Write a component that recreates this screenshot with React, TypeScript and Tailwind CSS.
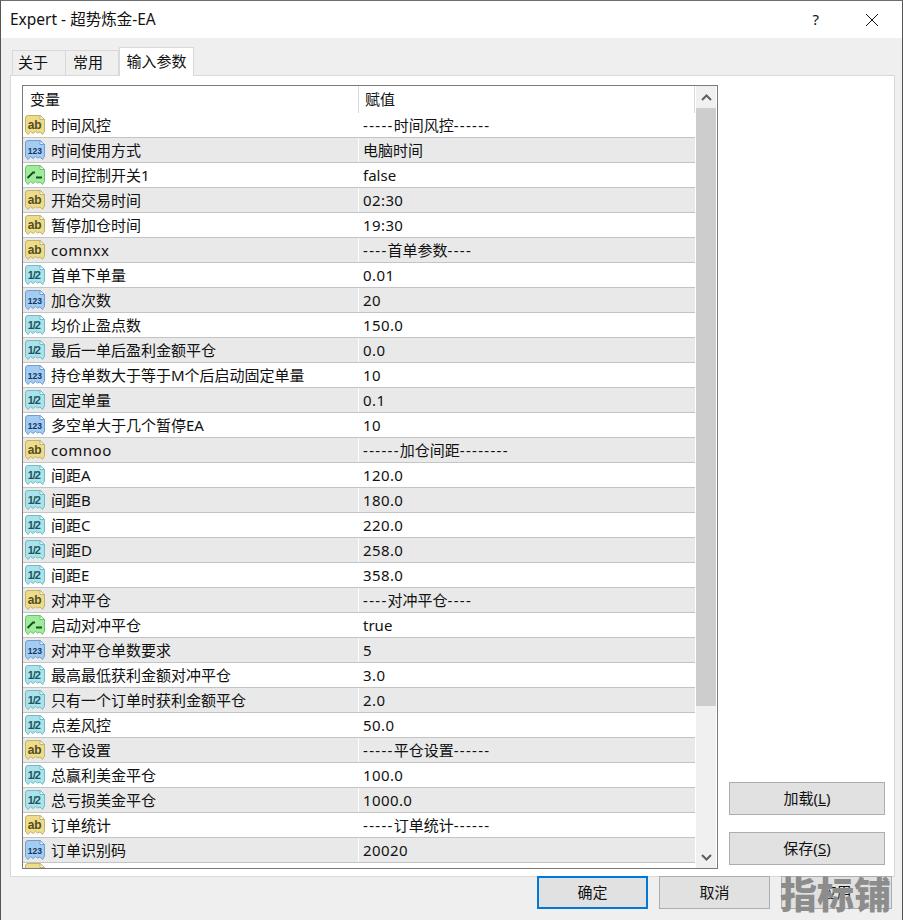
import React from 'react'

type Kind = 'ab' | '123' | 'sw' | 'half'

const rows: [Kind, string, string][] = [
  ['ab', '时间风控', '-----时间风控------'],
  ['123', '时间使用方式', '电脑时间'],
  ['sw', '时间控制开关1', 'false'],
  ['ab', '开始交易时间', '02:30'],
  ['ab', '暂停加仓时间', '19:30'],
  ['ab', 'comnxx', '----首单参数----'],
  ['half', '首单下单量', '0.01'],
  ['123', '加仓次数', '20'],
  ['half', '均价止盈点数', '150.0'],
  ['half', '最后一单后盈利金额平仓', '0.0'],
  ['123', '持仓单数大于等于M个后启动固定单量', '10'],
  ['half', '固定单量', '0.1'],
  ['123', '多空单大于几个暂停EA', '10'],
  ['ab', 'comnoo', '------加仓间距--------'],
  ['half', '间距A', '120.0'],
  ['half', '间距B', '180.0'],
  ['half', '间距C', '220.0'],
  ['half', '间距D', '258.0'],
  ['half', '间距E', '358.0'],
  ['ab', '对冲平仓', '----对冲平仓----'],
  ['sw', '启动对冲平仓', 'true'],
  ['123', '对冲平仓单数要求', '5'],
  ['half', '最高最低获利金额对冲平仓', '3.0'],
  ['half', '只有一个订单时获利金额平仓', '2.0'],
  ['half', '点差风控', '50.0'],
  ['ab', '平仓设置', '-----平仓设置------'],
  ['half', '总赢利美金平仓', '100.0'],
  ['half', '总亏损美金平仓', '1000.0'],
  ['ab', '订单统计', '-----订单统计------'],
  ['123', '订单识别码', '20020'],
]

const palette: Record<Kind, { fill: string; edge: string; ink: string }> = {
  ab: { fill: '#ecdc8c', edge: '#c2b26a', ink: '#544c1c' },
  '123': { fill: '#a3ccf3', edge: '#6f9fd0', ink: '#123663' },
  sw: { fill: '#a0ec9c', edge: '#6cc26c', ink: '#14501c' },
  half: { fill: '#ace3ea', edge: '#6fbcc8', ink: '#1b5663' },
}

const labels: Record<Kind, string> = { ab: 'ab', '123': '123', sw: '', half: '1/2' }
const labelSize: Record<Kind, number> = { ab: 12, '123': 8.5, sw: 0, half: 11 }

const TypeIcon: React.FC<{ kind: Kind; blank?: boolean }> = ({ kind, blank }) => {
  const c = palette[kind]
  return (
    <svg width="20" height="20" viewBox="0 0 20 20" className="shrink-0">
      <path
        d="M0.5 3 Q0.5 0.5 3 0.5 H15 L19.5 4.5 V16 L17.5 19.5 L15 17 L12.5 18 L10.5 16.5 L8 18.5 L5.5 16.5 L3 19.5 L0.5 16.5 Z"
        fill={c.fill}
        stroke={c.edge}
        strokeWidth="1"
      />
      <path d="M15 0.5 V4.5 H19.5 Z" fill="#ffffff" stroke={c.edge} strokeWidth="1" />
      {kind === 'sw' && <path d="M2.5 13 L8 7.5 L10 7.5 M11 12.5 H17" fill="none" stroke={c.ink} strokeWidth="1.8" />}
      {kind !== 'sw' && !blank && (
        <text
          x={2.7}
          y={14.2}
          fontFamily="'Liberation Sans', sans-serif"
          fontWeight={700}
          fontSize={labelSize[kind]}
          letterSpacing={kind === 'half' ? -1 : 0}
          fill={c.ink}
        >
          {labels[kind]}
        </text>
      )}
    </svg>
  )
}

// the dash runs and latin strings sit a bit wider in the original font
const ValueText: React.FC<{ value: string }> = ({ value }) => {
  if (/^[0-9.:]+$/.test(value)) return <span className="tracking-[0.4px]">{value}</span>
  return (
    <>
      {value.split(/(-+)/).map((part, i) => (
        <span key={i} className={part.startsWith('-') ? 'tracking-[1.3px]' : ''}>
          {part}
        </span>
      ))}
    </>
  )
}

const Row: React.FC<{ kind: Kind; name: string; value: string; shaded: boolean }> = ({ kind, name, value, shaded }) => (
  <div className={`flex h-[25px] shrink-0 border-b border-[#c4c4c4] ${shaded ? 'bg-[#e9e9e9]' : 'bg-white'}`}>
    <div className="flex w-[336px] shrink-0 items-center gap-[6px] border-r border-white pl-[2px]">
      <TypeIcon kind={kind} />
      <span className={`whitespace-nowrap ${name.startsWith('comn') ? 'tracking-[0.5px]' : ''}`}>{name}</span>
    </div>
    <div className="flex items-center whitespace-nowrap pl-[4px]">
      <ValueText value={value} />
    </div>
  </div>
)

const DlgButton: React.FC<{ label: React.ReactNode; primary?: boolean; wide?: boolean }> = ({ label, primary, wide }) => (
  <button
    className={`flex h-[33px] items-center justify-center bg-[#e1e1e1] ${wide ? 'w-[156px]' : 'w-[111px]'} ${
      primary ? 'border-2 border-[#0078d7]' : 'border border-[#adadad]'
    }`}
  >
    {label}
  </button>
)

export default function App() {
  return (
    <div
      className="relative flex h-[920px] w-[903px] flex-col overflow-hidden border-x border-t border-x-[#555555] border-t-[#6e6e6e] bg-[#efefef] text-[15px] text-[#111111]"
      style={{ fontFamily: "'Noto Sans', 'Noto Sans CJK SC', sans-serif" }}
    >
      {/* Title bar */}
      <div className="flex h-[37px] shrink-0 items-center justify-between bg-white pl-[9px]">
        <span className="text-[15.5px]">Expert - 超势炼金-EA</span>
        <div className="flex items-center">
          <span className="mr-[47px]">?</span>
          <svg width="12" height="12" viewBox="0 0 12 12" className="mr-[24px]">
            <path d="M0 0 L12 12 M12 0 L0 12" stroke="#111111" strokeWidth="1" fill="none" />
          </svg>
        </div>
      </div>

      {/* Tabs */}
      <div className="relative z-10 ml-[11px] mt-[9px] flex h-[29px] shrink-0 items-end">
        <div className="flex h-[26px] w-[54px] items-center border border-b-0 border-[#d9d9d9] pb-[2px] pl-[5px]">关于</div>
        <div className="flex h-[26px] w-[53px] items-center border-t border-r border-[#d9d9d9] pb-[2px] pl-[7px]">常用</div>
        <div className="flex h-[29px] w-[75px] items-center justify-center border border-b-0 border-[#d9d9d9] bg-white pb-[2px]">输入参数</div>
      </div>

      {/* Tab panel */}
      <div className="ml-[9px] mr-[7px] mt-[-1px] flex h-[802px] shrink-0 border border-[#d9d9d9] bg-white pl-[11px] pt-[9px]">
        <div className="flex h-[784px] w-[696px] shrink-0 border border-[#7a7a7a]">
          <div className="flex min-w-0 flex-1 flex-col overflow-hidden">
            <div className="flex h-[27px] shrink-0 items-center border-r border-[#d9d9d9]">
              <div className="flex h-full w-[336px] items-center border-r border-[#d9d9d9] pl-[7px]">变量</div>
              <div className="pl-[6px]">赋值</div>
            </div>
            {rows.map((r, i) => (
              <Row key={i} kind={r[0]} name={r[1]} value={r[2]} shaded={i % 2 === 1} />
            ))}
            <div className="h-[25px] shrink-0 bg-white pl-[2px]">
              <TypeIcon kind="ab" blank />
            </div>
          </div>
          {/* Scrollbar */}
          <div className="ml-[1px] mr-[1px] flex w-[20px] shrink-0 flex-col bg-[#f0f0f0]">
            <div className="flex h-[22px] shrink-0 items-center justify-center">
              <svg width="11" height="7" viewBox="0 0 11 7">
                <path d="M1 6 L5.5 1.5 L10 6" stroke="#606060" strokeWidth="2" fill="none" />
              </svg>
            </div>
            <div className="h-[598px] shrink-0 bg-[#cdcdcd]" />
            <div className="flex-1" />
            <div className="flex h-[21px] shrink-0 items-center justify-center">
              <svg width="11" height="7" viewBox="0 0 11 7">
                <path d="M1 1 L5.5 5.5 L10 1" stroke="#606060" strokeWidth="2" fill="none" />
              </svg>
            </div>
          </div>
        </div>

        {/* Load / save */}
        <div className="ml-[11px] flex flex-col gap-[17px] pt-[697px]">
          <DlgButton wide label={<span>加载(<u>L</u>)</span>} />
          <DlgButton wide label={<span>保存(<u>S</u>)</span>} />
        </div>
      </div>

      {/* Bottom buttons */}
      <div className="ml-[536px] mt-[-1px] flex gap-[11px]">
        <DlgButton primary label="确定" />
        <DlgButton label="取消" />
        <DlgButton label="应用" />
      </div>

      {/* Watermark over the last button */}
      <div className="absolute left-[779px] top-[872px] whitespace-nowrap text-[37px] font-black leading-[44px] text-[#8c8c8c]">
        指标铺
      </div>
    </div>
  )
}
